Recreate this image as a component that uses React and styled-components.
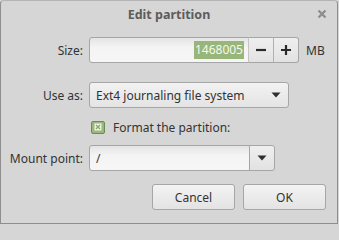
import React from "react";
import styled, { createGlobalStyle } from "styled-components";

const Global = createGlobalStyle`
  html, body { margin: 0; padding: 0; background: #d6d6d6; height: 224px; overflow: hidden; }
  body { font-family: "Noto Sans", "Open Sans", sans-serif; font-size: 12px; color: #333; }
  * { box-sizing: border-box; }
`;

const Window = styled.div`
  width: 338px;
  height: 224px;
  background: #d6d6d6;
  border: 1px solid #8e8e8e;
  border-top-color: #b4b4b4;
  border-radius: 4px 4px 0 0;
  display: flex;
  flex-direction: column;
`;

const TitleBar = styled.div`
  height: 26px;
  display: grid;
  grid-template-columns: 1fr auto 1fr;
  align-items: center;
`;

const Title = styled.div`
  grid-column: 2;
  font-weight: bold;
  color: #5c5c5c;
  font-size: 12.5px;
`;

const Close = styled.div`
  grid-column: 3;
  justify-self: end;
  margin-right: 10px;
  display: flex;
  align-items: center;
`;

const Body = styled.div`
  padding-top: 10px;
  display: flex;
  flex-direction: column;
`;

const Row = styled.div`
  display: flex;
  align-items: center;
  height: 26px;
  margin-top: ${(p) => p.$mt || 0}px;
`;

const Label = styled.div`
  width: 82px;
  text-align: right;
  margin-right: 6px;
  white-space: nowrap;
  color: #333;
`;

const Entry = styled.div`
  width: ${(p) => p.$w}px;
  height: 26px;
  border: 1px solid #a6a6a6;
  border-radius: ${(p) => p.$radius || "3px"};
  background: linear-gradient(#e4e4e4, #f4f4f4 40%, #f6f6f6);
  display: flex;
  align-items: center;
  justify-content: ${(p) => (p.$right ? "flex-end" : "flex-start")};
  padding: 0 4px 0 6px;
  color: #333;
`;

const Selected = styled.span`
  background: #98b67a;
  color: #f4f8ee;
  line-height: 18px;
  padding: 0 1px;
`;

const SpinButton = styled.div`
  width: 26px;
  height: 26px;
  border: 1px solid #a6a6a6;
  border-left: ${(p) => (p.$first ? "1px solid #c4c4c4" : "1px solid #b0b0b0")};
  border-radius: ${(p) => (p.$last ? "0 3px 3px 0" : "0")};
  background: linear-gradient(#efefef, #e2e2e2);
  display: flex;
  align-items: center;
  justify-content: center;
  margin-left: -1px;
`;

const Unit = styled.div`
  margin-left: 7px;
  color: #333;
`;

const Combo = styled.div`
  width: ${(p) => p.$w}px;
  height: 26px;
  border: 1px solid #a6a6a6;
  border-radius: 3px;
  background: linear-gradient(#f2f2f2, #e4e4e4);
  display: flex;
  align-items: center;
  justify-content: space-between;
  padding: 0 7px 0 6px;
  color: #333;
`;

const ArrowButton = styled.div`
  width: 26px;
  height: 26px;
  border: 1px solid #a6a6a6;
  border-radius: 0 3px 3px 0;
  background: linear-gradient(#efefef, #e2e2e2);
  margin-left: -1px;
  display: flex;
  align-items: center;
  justify-content: center;
`;

const CheckRow = styled.label`
  display: flex;
  align-items: center;
  margin-left: 90px;
  height: 14px;
  margin-top: ${(p) => p.$mt}px;
  color: #333;
`;

const CheckBox = styled.div`
  width: 14px;
  height: 13px;
  border: 1px solid #6f8a55;
  border-radius: 2px;
  background: #9ab87c;
  display: flex;
  align-items: center;
  justify-content: center;
  margin-right: 8px;
`;

const Buttons = styled.div`
  display: flex;
  justify-content: flex-end;
  gap: 8px;
  margin-top: 13px;
  padding-right: 11px;
`;

const Button = styled.div`
  width: 83px;
  height: 26px;
  border: 1px solid #a6a6a6;
  border-radius: 3px;
  background: linear-gradient(#f3f3f3, #e3e3e3);
  display: flex;
  align-items: center;
  justify-content: center;
  color: #333;
`;

const Arrow = () => (
  <svg width="10" height="6" viewBox="0 0 10 6">
    <path d="M0.5 0.5 H9.5 L5 5.5 Z" fill="#2e2e2e" />
  </svg>
);

export default function App() {
  return (
    <>
      <Global />
      <Window>
        <TitleBar>
          <Title>Edit partition</Title>
          <Close>
            <svg width="10" height="10" viewBox="0 0 10 10">
              <path d="M1.5 1.5 L8.5 8.5 M8.5 1.5 L1.5 8.5" stroke="#8c8c8c" strokeWidth="2.2" />
            </svg>
          </Close>
        </TitleBar>
        <Body>
          <Row>
            <Label>Size:</Label>
            <Entry $w={160} $radius="3px 0 0 3px" $right>
              <Selected>1468005</Selected>
            </Entry>
            <SpinButton $first>
              <svg width="12" height="12" viewBox="0 0 12 12">
                <path d="M1 6 H11" stroke="#2a2a2a" strokeWidth="2.2" />
              </svg>
            </SpinButton>
            <SpinButton $last>
              <svg width="12" height="12" viewBox="0 0 12 12">
                <path d="M1 6 H11 M6 1 V11" stroke="#2a2a2a" strokeWidth="2.2" />
              </svg>
            </SpinButton>
            <Unit>MB</Unit>
          </Row>
          <Row $mt={19}>
            <Label>Use as:</Label>
            <Combo $w={200}>
              <span>Ext4 journaling file system</span>
              <Arrow />
            </Combo>
          </Row>
          <CheckRow $mt={12}>
            <CheckBox>
              <svg width="8" height="8" viewBox="0 0 8 8">
                <rect x="0.5" y="0.5" width="7" height="7" fill="#eef3e8" />
                <path d="M2 2 L6 6 M6 2 L2 6" stroke="#8aa86c" strokeWidth="1.4" />
              </svg>
            </CheckBox>
            Format the partition:
          </CheckRow>
          <Row $mt={11}>
            <Label>Mount point:</Label>
            <Entry $w={161} $radius="3px 0 0 3px">/</Entry>
            <ArrowButton>
              <Arrow />
            </ArrowButton>
          </Row>
          <Buttons>
            <Button>Cancel</Button>
            <Button>OK</Button>
          </Buttons>
        </Body>
      </Window>
    </>
  );
}
